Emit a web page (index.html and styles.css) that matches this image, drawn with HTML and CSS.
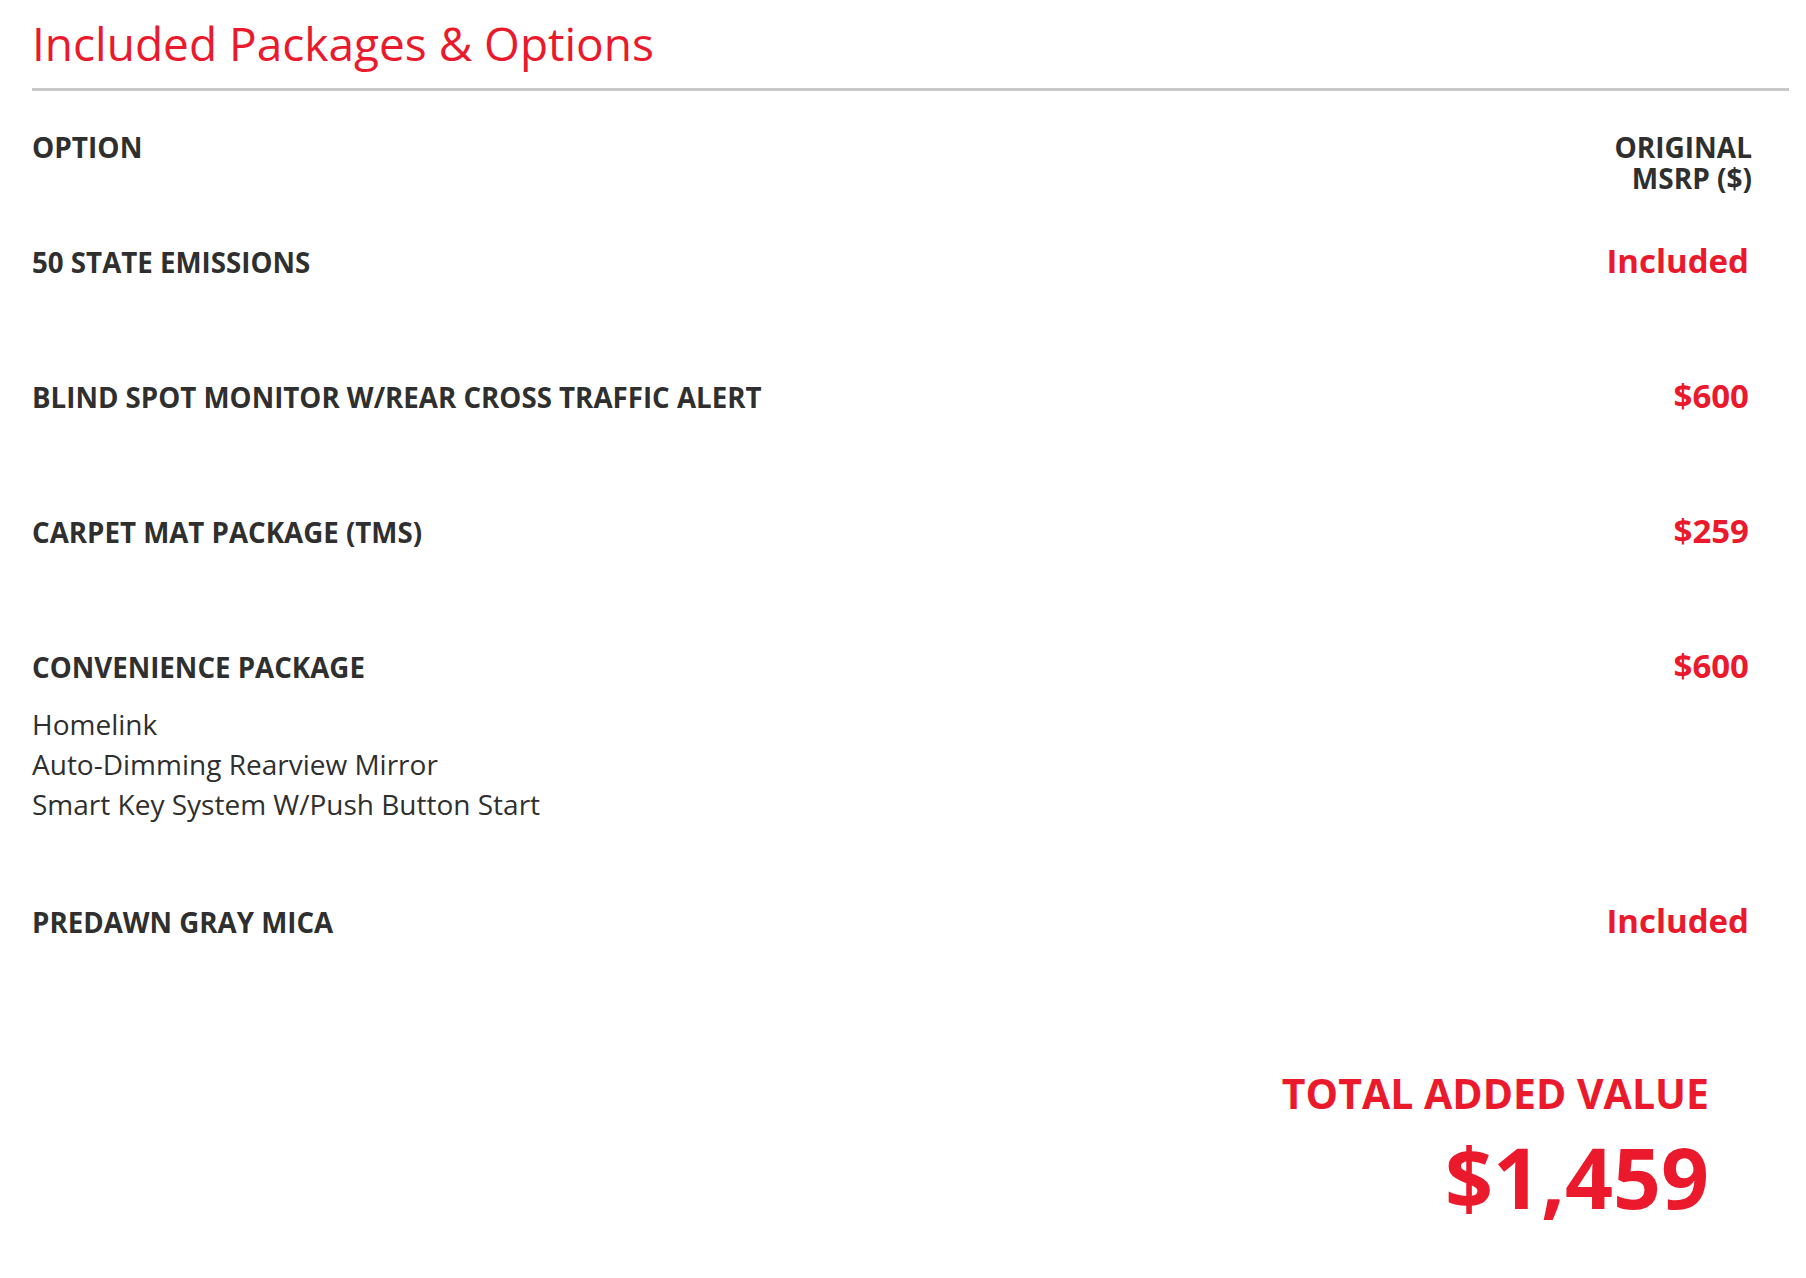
FILE: index.html
```html
<!DOCTYPE html>
<html lang="en">
<head>
  <meta charset="UTF-8">
  <meta name="viewport" content="width=device-width, initial-scale=1.0">
  <title>Included Packages &amp; Options</title>
  <link rel="stylesheet" href="styles.css">
</head>

<body>
  <div class="container">
    <h1 class="section-title">Included Packages &amp; Options</h1>

    <div class="options-table">
      <div class="options-head">
        <span class="head-label">Option</span>
        <span class="head-label head-price">Original<br>MSRP ($)</span>
      </div>

      <div class="option-row">
        <div class="option-info">
          <div class="option-name">50 State Emissions</div>
        </div>
        <div class="option-price">Included</div>
      </div>

      <div class="option-row">
        <div class="option-info">
          <div class="option-name">Blind Spot Monitor W/Rear Cross Traffic Alert</div>
        </div>
        <div class="option-price">$600</div>
      </div>

      <div class="option-row">
        <div class="option-info">
          <div class="option-name">Carpet Mat Package (TMS)</div>
        </div>
        <div class="option-price">$259</div>
      </div>

      <div class="option-row">
        <div class="option-info">
          <div class="option-name">Convenience Package</div>
          <ul class="option-features">
            <li>Homelink</li>
            <li>Auto-Dimming Rearview Mirror</li>
            <li>Smart Key System W/Push Button Start</li>
          </ul>
        </div>
        <div class="option-price">$600</div>
      </div>

      <div class="option-row">
        <div class="option-info">
          <div class="option-name">Predawn Gray Mica</div>
        </div>
        <div class="option-price">Included</div>
      </div>
    </div>

    <div class="total-block">
      <div class="total-label">Total Added Value</div>
      <div class="total-value">$1,459</div>
    </div>
  </div>
</body>

</html>
```

FILE: styles.css
```css
:root {
  --red: #ea1a2c;
  --text: #2f2f2f;
  --rule: #c8c8c8;
  --background: #ffffff;
}

* {
  margin: 0;
  padding: 0;
  box-sizing: border-box;
}

body {
  font-family: "Open Sans", "Noto Sans", sans-serif;
  background: var(--background);
  color: var(--text);
  -webkit-font-smoothing: antialiased;
}

.container {
  padding: 0 17px 40px 32px;
}

.section-title {
  font-size: 46px;
  font-weight: 400;
  line-height: 55px;
  color: var(--red);
  padding: 16px 0 17px;
  border-bottom: 3px solid var(--rule);
}

.options-table {
  padding-right: 37px;
}

.options-head {
  display: flex;
  justify-content: space-between;
  align-items: flex-start;
  margin-top: 41px;
  margin-bottom: 53px;
}

.head-label {
  font-size: 28px;
  font-weight: 700;
  line-height: 31px;
  text-transform: uppercase;
}

.head-price {
  text-align: right;
}

.option-row {
  display: flex;
  justify-content: space-between;
  align-items: baseline;
  padding-bottom: 83px;
}

.option-name {
  font-size: 27.7px;
  font-weight: 700;
  line-height: 30px;
  text-transform: uppercase;
  margin-bottom: 22px;
}

.option-features {
  list-style: none;
  font-size: 28px;
  line-height: 40px;
}

.option-price {
  font-size: 33px;
  font-weight: 700;
  line-height: 26px;
  color: var(--red);
  margin-right: 3px;
}

.total-block {
  display: flex;
  flex-direction: column;
  align-items: flex-end;
  gap: 14px;
  margin-top: 26px;
  padding-right: 80px;
  color: var(--red);
  font-weight: 700;
}

.total-label {
  font-size: 41px;
  line-height: 50px;
  text-transform: uppercase;
}

.total-value {
  font-size: 84px;
  line-height: 90px;
}
```
